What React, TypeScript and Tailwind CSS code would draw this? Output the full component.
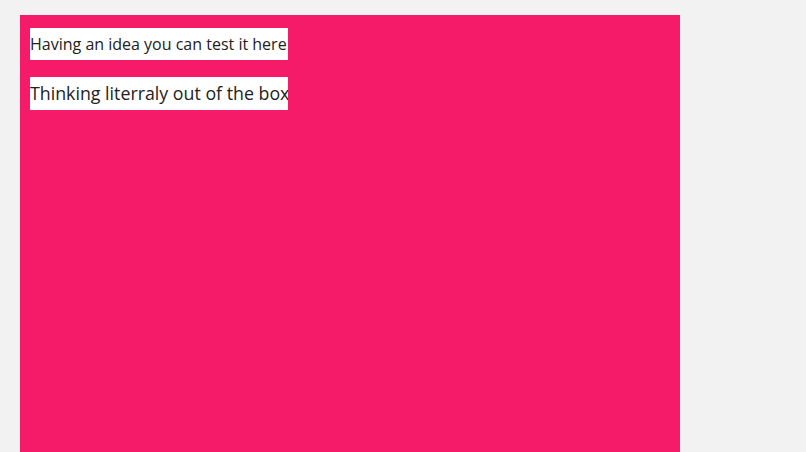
export default function App() {
  return (
    <div className="min-h-screen w-[806px] h-[452px] overflow-hidden bg-[#f2f2f2] pt-[15px] pl-[20px]">
      <div className="w-[660px] h-[437px] bg-[#f61b69] pt-[13px] pl-[10px] flex flex-col gap-[17px]">
        <div className="w-[258px] h-[32px] bg-white flex items-center overflow-hidden whitespace-nowrap font-['Open_Sans',sans-serif] text-[16px] text-[#222]">
          Having an idea you can test it here
        </div>
        <div className="w-[258px] h-[33px] bg-white flex items-center overflow-hidden whitespace-nowrap font-['Open_Sans',sans-serif] text-[17.8px] text-[#222]">
          Thinking literraly out of the box
        </div>
      </div>
    </div>
  );
}
